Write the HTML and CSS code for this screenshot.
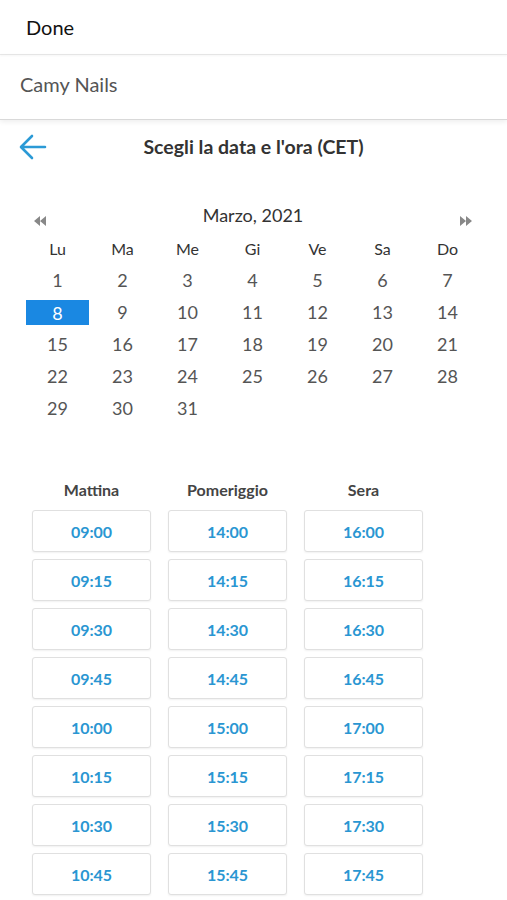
FILE: index.html
```html
<!DOCTYPE html>
<html lang="it">
<head>
<meta charset="utf-8">
<title>Scegli la data e l'ora</title>
<link rel="stylesheet" href="styles.css">
</head>
<body>
<div class="topbar"><span class="done">Done</span></div>
<div class="shop">Camy Nails</div>
<div class="titlebar">
  <svg class="back" width="28" height="26" viewBox="0 0 28 26"><path d="M26 13H3M13 2L2 13l11 11" fill="none" stroke="#2b9ad6" stroke-width="2.6" stroke-linecap="round" stroke-linejoin="round"/></svg>
  <h1 class="title">Scegli la data e l'ora (CET)</h1>
</div>
<div class="calendar">
  <div class="cal-head">
    <svg class="nav prev" width="14" height="12" viewBox="0 0 14 12"><path d="M7 1L1 6l6 5zM13 1L7 6l6 5z" fill="#888"/></svg>
    <div class="month">Marzo, 2021</div>
    <svg class="nav next" width="14" height="12" viewBox="0 0 14 12"><path d="M1 1l6 5-6 5zM7 1l6 5-6 5z" fill="#888"/></svg>
  </div>
  <div class="grid dow">
    <span>Lu</span><span>Ma</span><span>Me</span><span>Gi</span><span>Ve</span><span>Sa</span><span>Do</span>
  </div>
  <div class="grid days">
    <span>1</span><span>2</span><span>3</span><span>4</span><span>5</span><span>6</span><span>7</span>
    <span class="sel">8</span><span>9</span><span>10</span><span>11</span><span>12</span><span>13</span><span>14</span>
    <span>15</span><span>16</span><span>17</span><span>18</span><span>19</span><span>20</span><span>21</span>
    <span>22</span><span>23</span><span>24</span><span>25</span><span>26</span><span>27</span><span>28</span>
    <span>29</span><span>30</span><span>31</span>
  </div>
</div>
<div class="slots">
  <div class="col">
    <div class="col-title">Mattina</div>
    <button class="slot">09:00</button>
    <button class="slot">09:15</button>
    <button class="slot">09:30</button>
    <button class="slot">09:45</button>
    <button class="slot">10:00</button>
    <button class="slot">10:15</button>
    <button class="slot">10:30</button>
    <button class="slot">10:45</button>
  </div>
  <div class="col">
    <div class="col-title">Pomeriggio</div>
    <button class="slot">14:00</button>
    <button class="slot">14:15</button>
    <button class="slot">14:30</button>
    <button class="slot">14:45</button>
    <button class="slot">15:00</button>
    <button class="slot">15:15</button>
    <button class="slot">15:30</button>
    <button class="slot">15:45</button>
  </div>
  <div class="col">
    <div class="col-title">Sera</div>
    <button class="slot">16:00</button>
    <button class="slot">16:15</button>
    <button class="slot">16:30</button>
    <button class="slot">16:45</button>
    <button class="slot">17:00</button>
    <button class="slot">17:15</button>
    <button class="slot">17:30</button>
    <button class="slot">17:45</button>
  </div>
</div>
</body>
</html>
```
FILE: styles.css
```css
* { box-sizing: border-box; }
html, body { margin: 0; padding: 0; background: #fff; }
body {
  font-family: Lato, "Open Sans", "Liberation Sans", sans-serif;
  color: #333;
  width: 507px;
  height: 900px;
  overflow: hidden;
}
.topbar {
  height: 55px;
  display: flex;
  align-items: center;
  padding-left: 26px;
  border-bottom: 1px solid #e8e8e8;
  box-shadow: 0 1px 2px rgba(0,0,0,0.04);
}
.done { font-size: 20px; color: #111; }
.shop {
  height: 65px;
  display: flex;
  align-items: center;
  padding-left: 20px;
  padding-bottom: 6px;
  font-size: 20px;
  color: #555;
  border-bottom: 1px solid #d9d9d9;
  box-shadow: 0 2px 5px rgba(0,0,0,0.07);
  position: relative;
}
.titlebar {
  height: 54px;
  display: flex;
  align-items: center;
  justify-content: center;
  position: relative;
  margin-bottom: 26px;
}
.back { position: absolute; left: 19px; top: 14px; }
.title {
  margin: 0 0 2px 0;
  font-size: 19.5px;
  font-weight: 700;
  color: #333;
}
.calendar { width: 455px; margin-left: 25px; }
.cal-head {
  height: 30px;
  display: flex;
  align-items: center;
  justify-content: space-between;
  padding: 0 7px 0 8px;
}
.nav { margin-top: 12px; }
.month { font-size: 18px; color: #333; }
.grid {
  display: grid;
  grid-template-columns: repeat(7, 65px);
}
.grid span {
  display: flex;
  align-items: center;
  justify-content: center;
}
.dow { margin-top: 2px; }
.dow span { height: 32px; font-size: 16px; color: #333; }
.days span { height: 32px; font-size: 18px; color: #555; }
.days span.sel {
  background: #1a88e2;
  color: #fff;
  height: 25px;
  margin: 4px 0 3px 1px;
  width: 63px;
}
.slots {
  margin-top: 53px;
  margin-left: 32px;
  display: grid;
  grid-template-columns: repeat(3, 119px);
  column-gap: 17px;
}
.col { display: flex; flex-direction: column; gap: 7px; }
.col-title {
  height: 24px;
  margin-bottom: 2px;
  display: flex;
  align-items: center;
  justify-content: center;
  font-size: 16px;
  font-weight: 700;
  color: #444;
}
.slot {
  height: 42px;
  width: 119px;
  border: 1px solid #e0e0e0;
  border-radius: 3px;
  background: #fff;
  box-shadow: 0 1px 2px rgba(0,0,0,0.06);
  font-family: Lato, "Open Sans", "Liberation Sans", sans-serif;
  font-size: 16px;
  font-weight: 700;
  color: #2a96d2;
  padding: 0;
}
```
